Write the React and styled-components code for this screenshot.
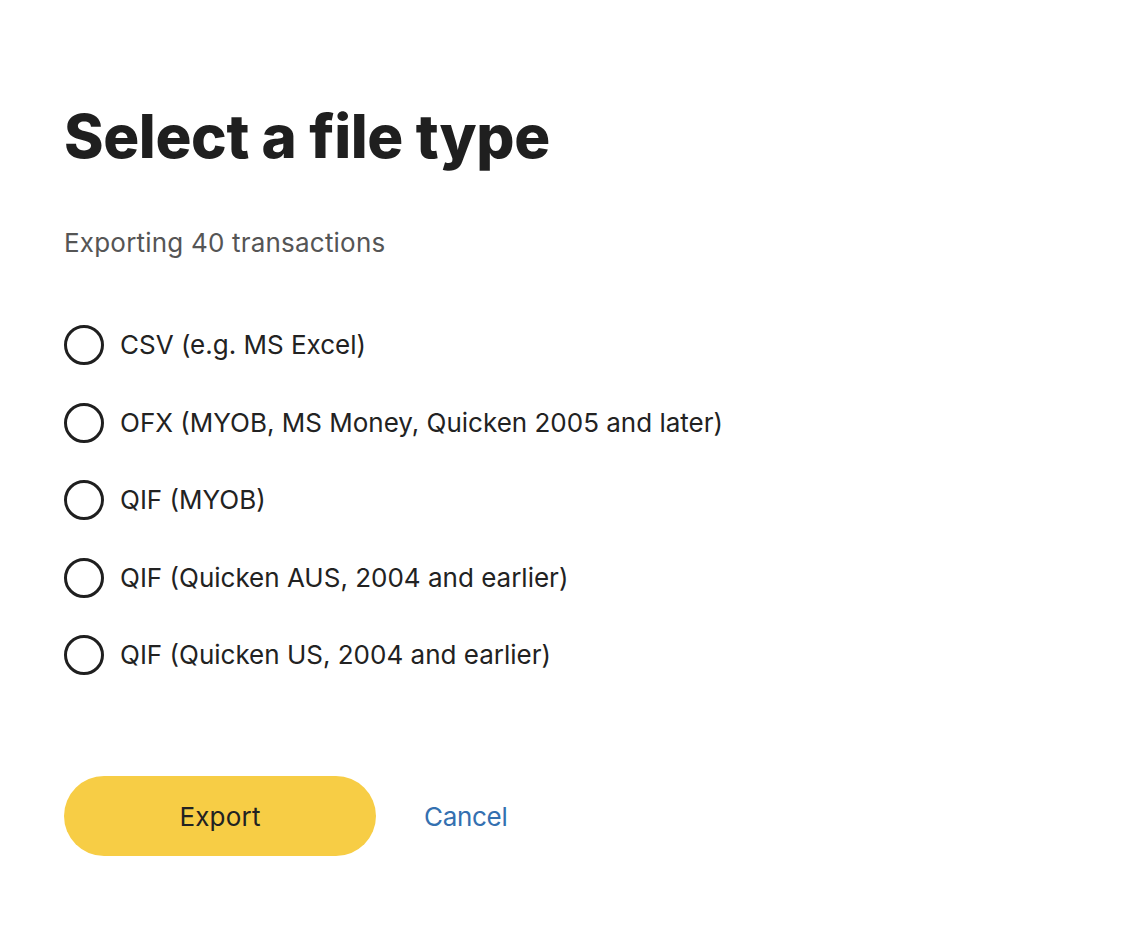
import React, { useState } from 'react';
import styled, { createGlobalStyle } from 'styled-components';

const GlobalStyle = createGlobalStyle`
  html, body {
    margin: 0;
    padding: 0;
    background: #ffffff;
  }
  body {
    font-family: Inter, "Liberation Sans", Arial, sans-serif;
    color: #222222;
    -webkit-font-smoothing: antialiased;
  }
`;

const Page = styled.div`
  padding: 98px 64px 0 64px;
  display: flex;
  flex-direction: column;
`;

const Title = styled.h1`
  margin: 0;
  font-family: Inter, "Liberation Sans", sans-serif;
  font-size: 60px;
  font-weight: 800;
  letter-spacing: -0.4px;
  line-height: 76px;
  color: #1f1f1f;
`;

const Subtitle = styled.p`
  margin: 53px 0 0 0;
  font-size: 26px;
  letter-spacing: 0.2px;
  line-height: 32px;
  color: #555555;
`;

const Options = styled.div`
  margin-top: 66px;
  display: flex;
  flex-direction: column;
  gap: 37.5px;
`;

const Option = styled.label`
  display: flex;
  align-items: center;
  gap: 16px;
  cursor: pointer;
  font-size: 26px;
  line-height: 40px;
  color: #222222;
`;

const Circle = styled.span`
  box-sizing: border-box;
  width: 40px;
  height: 40px;
  border-radius: 50%;
  border: 3px solid #1f1f1f;
  display: flex;
  align-items: center;
  justify-content: center;
  flex-shrink: 0;

  &::after {
    content: '';
    width: 20px;
    height: 20px;
    border-radius: 50%;
    background: #1f1f1f;
    display: ${(p) => (p.checked ? 'block' : 'none')};
  }
`;

const Actions = styled.div`
  margin-top: 101px;
  display: flex;
  align-items: center;
  gap: 48px;
`;

const ExportButton = styled.button`
  width: 312px;
  height: 80px;
  border: none;
  border-radius: 40px;
  background: #f7cd45;
  color: #222222;
  font-family: inherit;
  font-size: 26px;
  letter-spacing: 0.2px;
  cursor: pointer;
`;

const CancelLink = styled.a`
  font-size: 26px;
  letter-spacing: -0.3px;
  color: #3470b0;
  text-decoration: none;
  cursor: pointer;
`;

const types = [
  'CSV (e.g. MS Excel)',
  'OFX (MYOB, MS Money, Quicken 2005 and later)',
  'QIF (MYOB)',
  'QIF (Quicken AUS, 2004 and earlier)',
  'QIF (Quicken US, 2004 and earlier)',
];

export default function App() {
  const [selected, setSelected] = useState(null);
  return (
    <Page>
      <GlobalStyle />
      <Title>Select a file type</Title>
      <Subtitle>Exporting 40 transactions</Subtitle>
      <Options>
        {types.map((t, i) => (
          <Option key={t} onClick={() => setSelected(i)}>
            <Circle checked={selected === i} />
            {t}
          </Option>
        ))}
      </Options>
      <Actions>
        <ExportButton>Export</ExportButton>
        <CancelLink>Cancel</CancelLink>
      </Actions>
    </Page>
  );
}
